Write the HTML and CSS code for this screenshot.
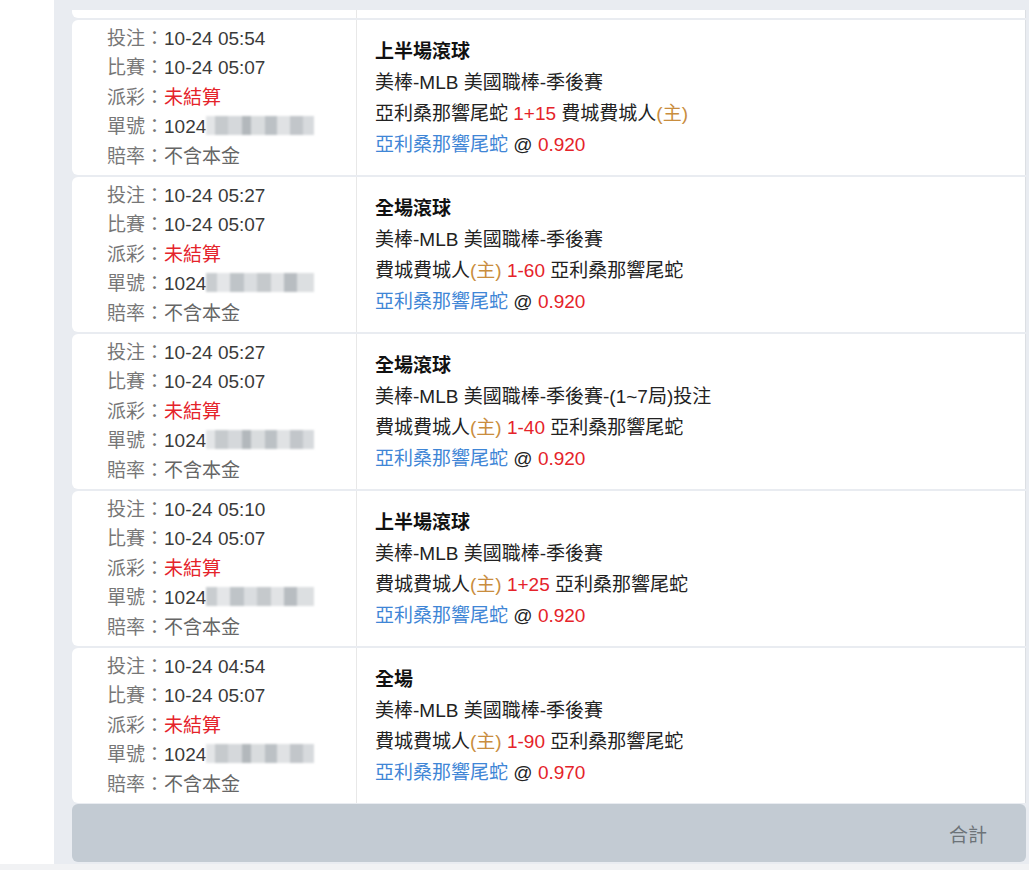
FILE: index.html
```html
<!DOCTYPE html>
<html>
  <head>
    <meta charset="utf-8">
    <title>注單</title>
    <link rel="stylesheet" href="styles.css">
  </head>
  <body>
    <div class="panel">
      <div class="bet-list">
        <div class="bet stub"><div class="bet-info"></div><div class="bet-detail"></div></div>

        <div class="bet">
          <div class="bet-info">
            <div><span class="label">投注：</span><span class="val">10-24 05:54</span></div>
            <div><span class="label">比賽：</span><span class="val">10-24 05:07</span></div>
            <div><span class="label">派彩：</span><span class="red">未結算</span></div>
            <div><span class="label">單號：</span><span class="val">1024</span><span class="mask m1"></span></div>
            <div><span class="label">賠率：</span><span class="note">不含本金</span></div>
          </div>
          <div class="bet-detail">
            <div class="title">上半場滾球</div>
            <div>美棒-MLB 美國職棒-季後賽</div>
            <div>亞利桑那響尾蛇 <span class="red">1+15</span> 費城費城人<span class="home">(主)</span></div>
            <div><span class="blue">亞利桑那響尾蛇</span> @ <span class="red">0.920</span></div>
          </div>
        </div>

        <div class="bet">
          <div class="bet-info">
            <div><span class="label">投注：</span><span class="val">10-24 05:27</span></div>
            <div><span class="label">比賽：</span><span class="val">10-24 05:07</span></div>
            <div><span class="label">派彩：</span><span class="red">未結算</span></div>
            <div><span class="label">單號：</span><span class="val">1024</span><span class="mask m2"></span></div>
            <div><span class="label">賠率：</span><span class="note">不含本金</span></div>
          </div>
          <div class="bet-detail">
            <div class="title">全場滾球</div>
            <div>美棒-MLB 美國職棒-季後賽</div>
            <div>費城費城人<span class="home">(主)</span> <span class="red">1-60</span> 亞利桑那響尾蛇</div>
            <div><span class="blue">亞利桑那響尾蛇</span> @ <span class="red">0.920</span></div>
          </div>
        </div>

        <div class="bet">
          <div class="bet-info">
            <div><span class="label">投注：</span><span class="val">10-24 05:27</span></div>
            <div><span class="label">比賽：</span><span class="val">10-24 05:07</span></div>
            <div><span class="label">派彩：</span><span class="red">未結算</span></div>
            <div><span class="label">單號：</span><span class="val">1024</span><span class="mask m1"></span></div>
            <div><span class="label">賠率：</span><span class="note">不含本金</span></div>
          </div>
          <div class="bet-detail">
            <div class="title">全場滾球</div>
            <div>美棒-MLB 美國職棒-季後賽-(1~7局)投注</div>
            <div>費城費城人<span class="home">(主)</span> <span class="red">1-40</span> 亞利桑那響尾蛇</div>
            <div><span class="blue">亞利桑那響尾蛇</span> @ <span class="red">0.920</span></div>
          </div>
        </div>

        <div class="bet">
          <div class="bet-info">
            <div><span class="label">投注：</span><span class="val">10-24 05:10</span></div>
            <div><span class="label">比賽：</span><span class="val">10-24 05:07</span></div>
            <div><span class="label">派彩：</span><span class="red">未結算</span></div>
            <div><span class="label">單號：</span><span class="val">1024</span><span class="mask m2"></span></div>
            <div><span class="label">賠率：</span><span class="note">不含本金</span></div>
          </div>
          <div class="bet-detail">
            <div class="title">上半場滾球</div>
            <div>美棒-MLB 美國職棒-季後賽</div>
            <div>費城費城人<span class="home">(主)</span> <span class="red">1+25</span> 亞利桑那響尾蛇</div>
            <div><span class="blue">亞利桑那響尾蛇</span> @ <span class="red">0.920</span></div>
          </div>
        </div>

        <div class="bet">
          <div class="bet-info">
            <div><span class="label">投注：</span><span class="val">10-24 04:54</span></div>
            <div><span class="label">比賽：</span><span class="val">10-24 05:07</span></div>
            <div><span class="label">派彩：</span><span class="red">未結算</span></div>
            <div><span class="label">單號：</span><span class="val">1024</span><span class="mask m1"></span></div>
            <div><span class="label">賠率：</span><span class="note">不含本金</span></div>
          </div>
          <div class="bet-detail">
            <div class="title">全場</div>
            <div>美棒-MLB 美國職棒-季後賽</div>
            <div>費城費城人<span class="home">(主)</span> <span class="red">1-90</span> 亞利桑那響尾蛇</div>
            <div><span class="blue">亞利桑那響尾蛇</span> @ <span class="red">0.970</span></div>
          </div>
        </div>
      </div>
      <div class="total">合計</div>
    </div>
    <div class="bottom-strip"></div>
  </body>
</html>
```

FILE: styles.css
```css
body {
  margin: 0;
  background: #fff;
  font-family: "Liberation Sans", "Noto Sans CJK TC", sans-serif;
  font-size: 19px;
  color: #222;
  height: 870px;
  overflow: hidden;
}
.panel {
  margin-left: 54px;
  height: 864px;
  box-sizing: border-box;
  padding: 10px 3px 2px 18px;
  background: #e9ecf1;
  display: flex;
  flex-direction: column;
}
.bet-list {
  display: flex;
  flex-direction: column;
  gap: 2px;
}
.bet {
  display: flex;
  height: 155px;
  background: #fff;
  border-radius: 6px 0 0 6px;
  border-right: 1px solid #dcdfe3;
}
.bet.stub {
  height: 8px;
  border-radius: 0 0 0 6px;
}
.bet-info {
  width: 285px;
  flex-shrink: 0;
  box-sizing: border-box;
  padding-left: 35px;
  border-right: 1px solid #e8e8e8;
  display: flex;
  flex-direction: column;
  justify-content: center;
  line-height: 29.5px;
  white-space: nowrap;
}
.bet-detail {
  flex: 1;
  padding-left: 18px;
  display: flex;
  flex-direction: column;
  justify-content: center;
  line-height: 31px;
  color: #222;
  white-space: nowrap;
}
.label {
  color: #777;
}
.val {
  color: #3a3a3a;
}
.note {
  color: #666;
}
.mask {
  display: inline-block;
  vertical-align: -2px;
  width: 108px;
  height: 19px;
  filter: blur(1px);
}
.m1 {
  background: linear-gradient(90deg, #e3e5e7 0 8%, #c6cacd 8% 20%, #d5d8db 20% 33%, #b3b8bc 33% 42%, #d9dcde 42% 55%, #bcc1c5 55% 66%, #e0e2e4 66% 78%, #c2c6ca 78% 90%, #d7dadd 90% 100%);
}
.m2 {
  background: linear-gradient(90deg, #c9cdd0 0 10%, #e4e6e8 10% 22%, #bfc4c8 22% 35%, #dadde0 35% 47%, #c5c9cc 47% 60%, #e1e3e5 60% 72%, #b8bdc1 72% 84%, #dcdfe1 84% 100%);
}
.title {
  font-weight: bold;
  color: #111;
}
.red {
  color: #e5232a;
}
.home {
  color: #c98d3e;
}
.blue {
  color: #3f86d6;
}
.total {
  margin-top: 1px;
  height: 58px;
  background: #c3cbd3;
  border-radius: 6px;
  display: flex;
  align-items: center;
  justify-content: flex-end;
  padding-right: 39px;
  color: #6d7378;
}
.bottom-strip {
  height: 6px;
  background: #f1f2f4;
}
```
